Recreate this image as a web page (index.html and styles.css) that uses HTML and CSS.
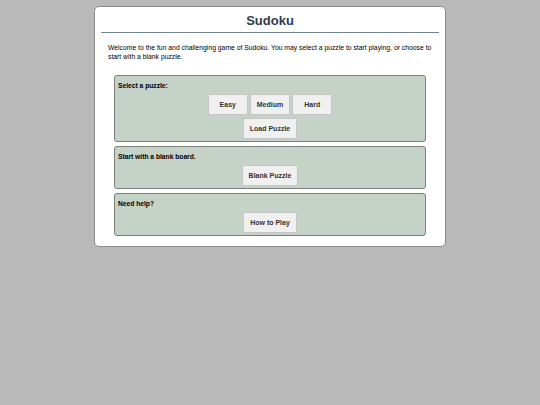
FILE: index.html
```html
<!DOCTYPE html>
<html lang="en">
<head>
<meta charset="utf-8">
<title>Sudoku</title>
<link rel="stylesheet" href="styles.css">
</head>
<body>
<div class="container">
  <h1 class="title">Sudoku</h1>
  <p class="intro">Welcome to the fun and challenging game of Sudoku. You may select a puzzle to start playing, or choose to start with a blank puzzle.</p>
  <div class="panels">
    <section class="panel">
      <div class="label">Select a puzzle:</div>
      <div class="btn-rows">
        <div class="btn-row">
          <button class="btn">Easy</button>
          <button class="btn">Medium</button>
          <button class="btn">Hard</button>
        </div>
        <div class="btn-row">
          <button class="btn">Load Puzzle</button>
        </div>
      </div>
    </section>
    <section class="panel">
      <div class="label">Start with a blank board.</div>
      <div class="btn-rows">
        <div class="btn-row">
          <button class="btn">Blank Puzzle</button>
        </div>
      </div>
    </section>
    <section class="panel">
      <div class="label">Need help?</div>
      <div class="btn-rows">
        <div class="btn-row">
          <button class="btn">How to Play</button>
        </div>
      </div>
    </section>
  </div>
</div>
</body>
</html>
```

FILE: styles.css
```css
html, body {
  margin: 0;
  padding: 0;
  background: #b9b9b9;
  font-family: "Liberation Sans", Arial, sans-serif;
}

.container {
  box-sizing: border-box;
  width: 352px;
  margin: 6px 0 0 94px;
  background: #ffffff;
  border: 1px solid #8c8c8c;
  border-radius: 5px;
  padding: 6px 6px 10px;
}

.title {
  margin: 0;
  padding-bottom: 3px;
  font-size: 13px;
  line-height: 16px;
  font-weight: bold;
  text-align: center;
  color: #2c3e50;
  border-bottom: 1px solid #718593;
}

.intro {
  margin: 10px 7px 0;
  font-size: 6.8px;
  line-height: 9px;
  color: #000000;
}

.panels {
  display: flex;
  flex-direction: column;
  gap: 4px;
  margin: 14px 13px 0;
}

.panel {
  background: #c5d2c7;
  border: 1px solid #7b7f7c;
  border-radius: 3px;
  padding: 5px 3px 2px;
}

.label {
  font-size: 6.7px;
  line-height: 9px;
  font-weight: bold;
  color: #000000;
  margin-bottom: 4px;
}

.btn-rows {
  display: flex;
  flex-direction: column;
  gap: 3px;
}

.btn-row {
  display: flex;
  justify-content: center;
  gap: 2px;
}

.btn {
  box-sizing: border-box;
  min-width: 40px;
  height: 21px;
  padding: 0 6px;
  margin: 0;
  background: #f0f0f0;
  border: 1px solid #c6c6c6;
  border-radius: 0;
  font-family: "Liberation Sans", Arial, sans-serif;
  font-size: 7px;
  font-weight: bold;
  color: #333333;
}
```
